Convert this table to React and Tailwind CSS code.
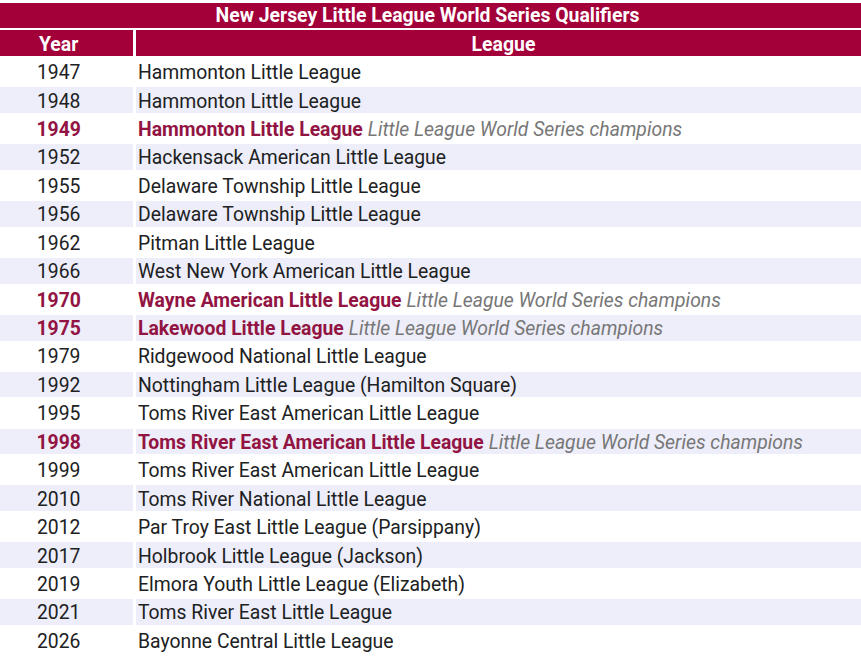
import React from "react";

const rows = [
  ["1947", "Hammonton Little League"],
  ["1948", "Hammonton Little League"],
  ["1949", "Hammonton Little League", true],
  ["1952", "Hackensack American Little League"],
  ["1955", "Delaware Township Little League"],
  ["1956", "Delaware Township Little League"],
  ["1962", "Pitman Little League"],
  ["1966", "West New York American Little League"],
  ["1970", "Wayne American Little League", true],
  ["1975", "Lakewood Little League", true],
  ["1979", "Ridgewood National Little League"],
  ["1992", "Nottingham Little League (Hamilton Square)"],
  ["1995", "Toms River East American Little League"],
  ["1998", "Toms River East American Little League", true],
  ["1999", "Toms River East American Little League"],
  ["2010", "Toms River National Little League"],
  ["2012", "Par Troy East Little League (Parsippany)"],
  ["2017", "Holbrook Little League (Jackson)"],
  ["2019", "Elmora Youth Little League (Elizabeth)"],
  ["2021", "Toms River East Little League"],
  ["2026", "Bayonne Central Little League"],
];

export default function App() {
  return (
    <div
      className="w-[861px] h-[662px] overflow-hidden bg-white text-[#202122]"
      style={{ fontFamily: "Roboto, 'Noto Sans', sans-serif" }}
    >
      <div className="-ml-[16px] w-[887px] pt-[2.5px] flex flex-col gap-[2.7px]">
        <div className="h-[25px] pt-[2px] bg-[#a3003a] text-white font-bold text-[19.4px] flex items-center justify-center leading-none">
          New Jersey Little League World Series Qualifiers
        </div>
        <div className="flex gap-[2.7px] h-[26px]">
          <div className="w-[149.3px] shrink-0 pt-[4px] bg-[#a3003a] text-white font-bold text-[19.4px] flex items-center justify-center leading-none">
            Year
          </div>
          <div className="flex-1 pt-[4px] bg-[#a3003a] text-white font-bold text-[19.4px] flex items-center justify-center leading-none">
            League
          </div>
        </div>
        {rows.map(([year, league, champ], i) => {
          const bg = i % 2 === 1 ? "bg-[#eeeefa]" : "bg-white";
          return (
            <div key={year} className="flex gap-[2.7px] h-[25.75px]">
              <div
                className={`w-[149.3px] shrink-0 pt-[2px] ${bg} text-[19.35px] flex items-center justify-center leading-none ${
                  champ ? "font-bold text-[#921443]" : ""
                }`}
              >
                {year}
              </div>
              <div className={`flex-1 pt-[2px] ${bg} text-[19.35px] flex items-center pl-[2px] leading-none whitespace-nowrap`}>
                {champ ? (
                  <>
                    <span className="font-bold text-[#921443]">{league}</span>
                    <span className="italic text-[#777777] ml-[5px]">Little League World Series champions</span>
                  </>
                ) : (
                  league
                )}
              </div>
            </div>
          );
        })}
      </div>
    </div>
  );
}
